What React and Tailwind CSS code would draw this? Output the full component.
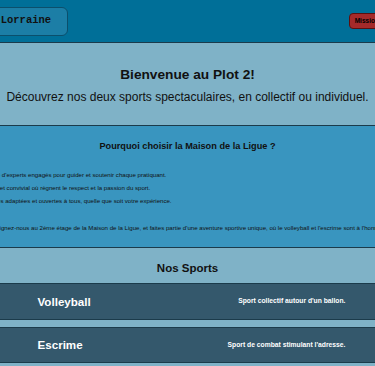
import React from 'react';

const App = () => {
  const reasons = [
    "Une équipe d'experts engagés pour guider et soutenir chaque pratiquant.",
    'Un lieu sûr et convivial où règnent le respect et la passion du sport.',
    'Des activités adaptées et ouvertes à tous, quelle que soit votre expérience.'
  ];

  const sports = [
    { id: 'volley', name: 'Volleyball', description: "Sport collectif autour d'un ballon." },
    { id: 'escrime', name: 'Escrime', description: "Sport de combat stimulant l'adresse." }
  ];

  return (
    <div className="w-[375px] h-[366px] overflow-hidden bg-[#7fb2c7] font-['Liberation_Sans',Arial,sans-serif]">
      <div className="flex justify-center">
        <div className="w-[460px] shrink-0">
          <header className="flex items-center justify-between h-[43px] pl-[1px] pr-[29px] bg-[#006f98] border-b-[1.5px] border-[#1b3b4b]">
            <div className="h-[29px] flex items-center px-[16px] bg-[#1c7ea6] border border-[#0b4f6c] rounded-md">
              <span className="font-['Liberation_Mono',monospace] font-bold text-[10.5px] text-[#111]">M2L Lorraine</span>
            </div>
            <nav className="flex">
              <button className="h-[16px] px-[5px] bg-[#a52a2a] border border-[#5a1010] rounded-[4px] text-[6.5px] font-bold text-black">Missions</button>
            </nav>
          </header>

          <section className="h-[83px] flex flex-col items-center justify-center pt-[4px] bg-[#7fb2c7] border-b-[1.5px] border-[#1b3b4b] text-[#111]">
            <h1 className="text-[13.7px] font-bold leading-[20px]">Bienvenue au Plot 2!</h1>
            <p className="text-[12px] leading-[20px] mt-[2px]">Découvrez nos deux sports spectaculaires, en collectif ou individuel.</p>
          </section>

          <section className="h-[122px] bg-[#3995bf] border-b-[1.5px] border-[#1b3b4b] text-[#111]">
            <h2 className="text-center text-[9.2px] font-bold leading-[14px] pt-[13px]">Pourquoi choisir la Maison de la Ligue ?</h2>
            <ul className="mt-[17px] pl-[11.5px] flex flex-col gap-[4px] text-[6.1px] leading-[9px]">
              {reasons.map((r) => (
                <li key={r}>{r}</li>
              ))}
            </ul>
            <p className="mt-[18px] text-center whitespace-nowrap text-[6.1px] leading-[9px]">
              Rejoignez-nous au 2ème étage de la Maison de la Ligue, et faites partie d'une aventure sportive unique, où le volleyball et l'escrime sont à l'honneur.
            </p>
          </section>

          <section className="bg-[#7fb2c7]">
            <h2 className="h-[36px] flex items-center justify-center pt-[7px] text-[11.5px] font-bold text-[#111] border-b-[1.5px] border-[#1b3b4b]">Nos Sports</h2>
            <div className="flex flex-col gap-[7px]">
              {sports.map((s) => (
                <div key={s.id} className="h-[36px] flex items-center justify-between pl-[80px] pr-[72px] bg-[#34586c] border-b-[1.5px] border-t-[1.5px] border-[#1b3b4b] first:border-t-0 text-white">
                  <span className="text-[11.6px] font-bold">{s.name}</span>
                  <span className="text-[6.75px] font-bold">{s.description}</span>
                </div>
              ))}
            </div>
          </section>
        </div>
      </div>
    </div>
  );
};

export default App;
